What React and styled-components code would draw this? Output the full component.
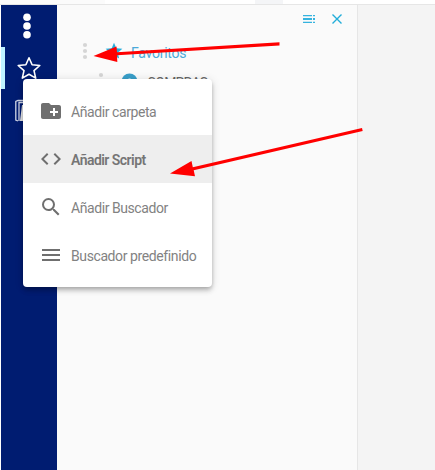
import React from 'react';
import styled, { createGlobalStyle, css } from 'styled-components';

const GlobalStyle = createGlobalStyle`
  * { box-sizing: border-box; }
  body {
    margin: 0;
    overflow: hidden;
    background: #fff;
    font-family: Roboto, "Noto Sans", sans-serif;
  }
`;

const Page = styled.div`
  position: relative;
  display: flex;
  flex-direction: column;
  width: 435px;
  height: 470px;
  overflow: hidden;
`;

const TopStrip = styled.div`
  display: flex;
  flex: 0 0 5px;
  border-bottom: 1px solid #e6e6e6;
`;

const StripPart = styled.div`
  width: ${(p) => p.$width}px;
  height: 4px;
  background: ${(p) => p.$color};
`;

const Body = styled.div`
  display: flex;
  flex: 1;
  padding-left: 1px;
`;

const Sidebar = styled.nav`
  display: flex;
  flex-direction: column;
  width: 56px;
  background: #001c71;
`;

const NavItem = styled.div`
  display: flex;
  align-items: center;
  justify-content: center;
  height: 42px;
  ${(p) => p.$active && css`
    border-left: 4px solid #c0f3ff;
    padding-right: 4px;
  `}
  ${(p) => p.$menu && css`padding-right: 4px;`}
  svg { display: block; }
`;

const Panel = styled.aside`
  display: flex;
  flex-direction: column;
  width: 301px;
  background: #fafafa;
  border-right: 1px solid #e6e6e6;
`;

const PanelTools = styled.div`
  display: flex;
  justify-content: flex-end;
  align-items: center;
  gap: 16px;
  height: 28px;
  padding-right: 14px;
  svg { display: block; }
`;

const TreeRow = styled.div`
  display: flex;
  align-items: center;
  height: 28px;
  margin-top: ${(p) => p.$top || 0}px;
  padding-left: ${(p) => p.$indent}px;
  svg { display: block; }
`;

const TreeLabel = styled.span`
  margin-left: ${(p) => p.$gap}px;
  padding-top: 4px;
  color: ${(p) => p.$color};
  font-size: 14px;
  line-height: 20px;
  letter-spacing: ${(p) => p.$spacing}px;
  white-space: nowrap;
`;

const IconSlot = styled.span`
  display: flex;
  margin-left: ${(p) => p.$gap}px;
`;

const Content = styled.main`
  flex: 1;
  background: #f4f4f4;
`;

const Menu = styled.div`
  position: absolute;
  left: 23px;
  top: 79px;
  width: 189px;
  padding: 8px 0;
  border-radius: 4px;
  background: #fff;
  box-shadow: 0 2px 4px -1px rgba(0, 0, 0, 0.2), 0 4px 5px rgba(0, 0, 0, 0.14),
    0 1px 10px rgba(0, 0, 0, 0.12);
`;

const MenuItem = styled.div`
  display: flex;
  align-items: center;
  gap: 8px;
  height: 48px;
  padding: 0 16px;
  color: ${(p) => (p.$active ? '#757575' : '#828282')};
  background: ${(p) => (p.$active ? '#eeeeee' : 'transparent')};
  svg { display: block; flex: none; fill: #6f6f6f; }
`;

const MenuLabel = styled.span`
  padding-top: 2px;
  font-size: 14px;
  line-height: 20px;
  font-weight: ${(p) => (p.$strong ? 600 : 400)};
  letter-spacing: ${(p) => p.$spacing}px;
  white-space: nowrap;
`;

const Arrows = styled.svg`
  position: absolute;
  left: 0;
  top: 0;
  pointer-events: none;
`;

const Dots = ({ width, height, r, step, color }) => (
  <svg width={width} height={height} fill={color}>
    {[-1, 0, 1].map((n) => (
      <circle key={n} cx={width / 2} cy={height / 2 + n * step} r={r} />
    ))}
  </svg>
);

const items = [
  {
    label: 'Añadir carpeta',
    spacing: -0.42,
    d: 'M20 6h-8l-2-2H4c-1.11 0-1.99.89-1.99 2L2 18c0 1.1.89 2 2 2h16c1.1 0 2-.9 2-2V8c0-1.1-.9-2-2-2zm-1 8h-3v3h-2v-3h-3v-2h3V9h2v3h3v2z',
  },
  {
    label: 'Añadir Script',
    spacing: -0.54,
    active: true,
    d: 'M9.4 16.6L4.8 12l4.6-4.6L8 6l-6 6 6 6 1.4-1.4zm5.2 0l4.6-4.6-4.6-4.6L16 6l6 6-6 6-1.4-1.4z',
  },
  {
    label: 'Añadir Buscador',
    spacing: -0.43,
    d: 'M15.5 14h-.79l-.28-.27A6.47 6.47 0 0 0 16 9.5 6.5 6.5 0 1 0 9.5 16c1.61 0 3.09-.59 4.23-1.57l.27.28v.79l5 4.99L20.49 19l-4.99-5zm-6 0C7.01 14 5 11.99 5 9.5S7.01 5 9.5 5 14 7.01 14 9.5 11.99 14 9.5 14z',
  },
  {
    label: 'Buscador predefinido',
    spacing: -0.4,
    d: 'M3 18h18v-2H3v2zm0-5h18v-2H3v2zm0-7v2h18V6H3z',
  },
];

export default function App() {
  return (
    <Page>
      <GlobalStyle />
      <TopStrip>
        <StripPart $width={105} $color="#fbfbfb" />
        <StripPart $width={150} $color="#ffffff" />
        <StripPart $width={28} $color="#f4f5f7" />
      </TopStrip>
      <Body>
        <Sidebar>
          <NavItem $menu>
            <Dots width={10} height={26} r={3.8} step={8.7} color="#fff" />
          </NavItem>
          <NavItem $active>
            <svg width="24" height="24" viewBox="0 0 24 24" fill="none" stroke="#fff" strokeWidth="1.6" strokeLinejoin="round">
              <path d="M12 1.8l3.1 7 7.7.7-5.8 5.1 1.7 7.5L12 18.2l-6.7 3.9L7 14.6 1.2 9.5l7.7-.7z" />
            </svg>
          </NavItem>
          <NavItem>
            <svg width="28" height="24" viewBox="0 0 28 24" fill="none" stroke="#cfd5e6" strokeWidth="1.3">
              <path d="M3 23L.8 22V3.5L3 2.5h8" />
              <path d="M4 23V4.5h9" />
              <path d="M5 23L7 7h7v16z" fill="#e6e6e6" stroke="none" />
            </svg>
          </NavItem>
        </Sidebar>
        <Panel>
          <PanelTools>
            <svg width="12" height="8" fill="#35b3df">
              <path d="M0 0h9v1.3H0zM0 3h9v2H0zM0 6.7h9V8H0zM10 0h2v1.3h-2zM10 3h2v2h-2zM10 6.7h2V8h-2z" />
            </svg>
            <svg width="12" height="12" stroke="#22add9" strokeWidth="1.4">
              <path d="M1.5 1.5l9 9m0-9l-9 9" />
            </svg>
          </PanelTools>
          <TreeRow $top={4} $indent={23}>
            <Dots width={10} height={18} r={2.1} step={6} color="#d5d5d5" />
            <IconSlot $gap={14}>
              <svg width="20" height="20" viewBox="0 0 24 24" fill="#27addb">
                <path d="M12 17.27L18.18 21l-1.64-7.03L22 9.24l-7.19-.61L12 2 9.19 8.63 2 9.24l5.46 4.73L5.82 21z" />
              </svg>
            </IconSlot>
            <TreeLabel $gap={7} $color="#4ba9d9" $spacing={-0.25}>Favoritos</TreeLabel>
          </TreeRow>
          <TreeRow $top={2} $indent={39}>
            <Dots width={10} height={18} r={2.1} step={6} color="#d5d5d5" />
            <IconSlot $gap={15}>
              <svg width="17" height="17">
                <circle cx="8.5" cy="8.5" r="8" fill="#399fc9" />
                <circle cx="8.5" cy="8" r="2.5" fill="#fff" />
              </svg>
            </IconSlot>
            <TreeLabel $gap={9} $color="#666" $spacing={-0.8}>COMPRAS</TreeLabel>
          </TreeRow>
        </Panel>
        <Content />
      </Body>
      <Menu>
        {items.map((item) => (
          <MenuItem key={item.label} $active={item.active}>
            <svg width="24" height="24" viewBox="0 0 24 24">
              <path d={item.d} />
            </svg>
            <MenuLabel $strong={item.active} $spacing={item.spacing}>{item.label}</MenuLabel>
          </MenuItem>
        ))}
      </Menu>
      <Arrows width="435" height="470" fill="#f00" stroke="none">
        <path d="M93.5 56L116.5 46.5 117 52.3 279.5 42.3V45.4L117 55.3 117.3 62z" />
        <path d="M170 173.5L191.5 161 192.8 167.2 362 128 362.7 131 193.7 170.2 195 176.3z" />
      </Arrows>
    </Page>
  );
}
